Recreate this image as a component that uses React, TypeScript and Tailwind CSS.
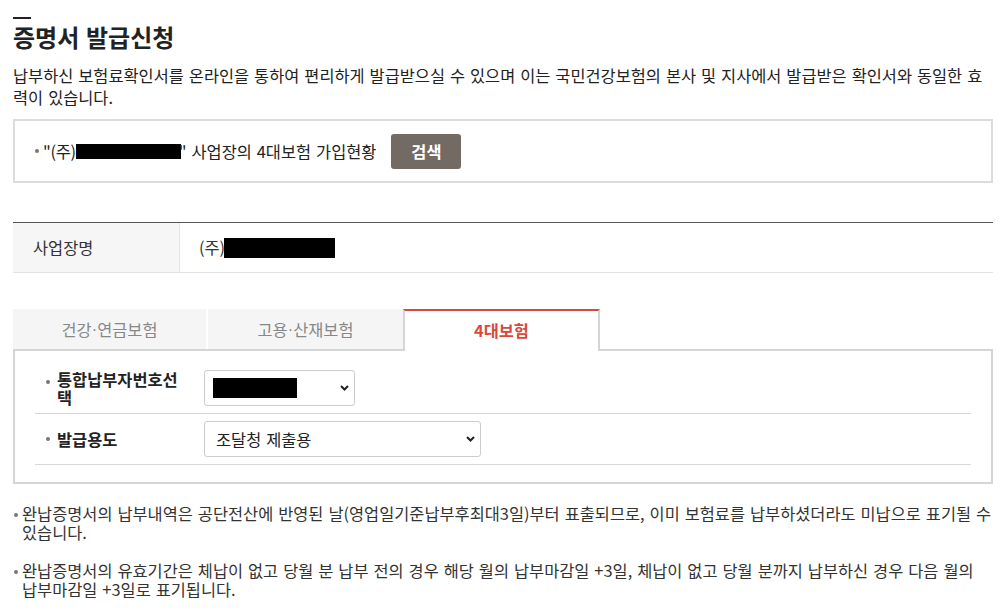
import React from 'react';

function Chevron() {
  return (
    <svg width="9" height="6" viewBox="0 0 9 6" className="absolute right-[5px] top-1/2 -translate-y-1/2">
      <path d="M1 1l3.5 3.5L8 1" fill="none" stroke="#222" strokeWidth="2" />
    </svg>
  );
}

const tabs = [
  ['건강', '연금보험'],
  ['고용', '산재보험'],
];

export default function App() {
  return (
    <div className="min-h-[608px] w-[1001px] bg-white pl-[13px] pr-[8px] pt-[17px] font-['Noto_Sans_CJK_KR','Noto_Sans',sans-serif] text-[16.4px] text-[#222] [word-spacing:1.3px]">
      <div className="h-[2px] w-[18px] bg-[#222]" />
      <h2 className="mt-[3px] text-[24px] font-bold leading-[30px]">증명서 발급신청</h2>
      <p className="mt-[12px] leading-[22px]">
        납부하신 보험료확인서를 온라인을 통하여 편리하게 발급받으실 수 있으며 이는 국민건강보험의 본사 및 지사에서 발급받은 확인서와 동일한 효력이 있습니다.
      </p>

      {/* 검색 박스 */}
      <div className="mt-[11px] flex h-[64px] items-center border-2 border-[#dcdcdc] pl-[20px]">
        <span className="h-[4px] w-[4px] rounded-full bg-[#777]" />
        <span className="ml-[4px] tracking-[-0.3px]">"(주)</span>
        <span className="inline-block h-[15px] w-[105px] bg-black" />
        <span className="-ml-[2px]">" 사업장의 4대보험 가입현황</span>
        <button className="ml-[15px] h-[35px] w-[70px] rounded-[3px] bg-[#746a64] font-bold text-white">
          검색
        </button>
      </div>

      {/* 사업장명 */}
      <div className="mt-[39px] flex border-t border-b border-t-[#555] border-b-[#e3e3e3]">
        <div className="flex h-[49px] w-[167px] items-center border-r border-[#e3e3e3] bg-[#f6f6f6] pl-[20px] text-[#333]">
          사업장명
        </div>
        <div className="flex items-center pl-[19px] text-[#333]">
          (주)
          <span className="-ml-[1px] inline-block h-[20px] w-[111px] bg-black" />
        </div>
      </div>

      {/* 탭 */}
      <div className="relative z-10 mt-[36px] -mb-[2px] flex items-start">
        {tabs.map(([a, b], i) => (
          <div
            key={a}
            className={`flex h-[40px] items-center justify-center bg-[#f5f5f5] text-[#888] ${
              i === 0 ? 'mr-[2px] w-[193px]' : 'w-[195px]'
            }`}
          >
            {a}
            <span className="font-['Liberation_Sans',sans-serif]">·</span>
            {b}
          </div>
        ))}
        <div className="flex h-[42px] w-[197px] items-center justify-center border-x-2 border-t-2 border-x-[#d5d5d5] border-t-[#d8493d] bg-white pb-[2px] font-bold text-[#d8493d]">
          4대보험
        </div>
      </div>
      <div className="border-2 border-[#d5d5d5] px-[20px] pt-[12px] pb-[17px]">
        <div className="flex items-center border-b border-[#d8d8d8] py-[7px]">
          <div className="flex w-[169px] items-start pl-[11px]">
            <span className="mt-[10px] h-[4px] w-[4px] shrink-0 rounded-full bg-[#777]" />
            <span className="ml-[7px] w-[128px] font-bold leading-[18px]">통합납부자번호선택</span>
          </div>
          <div className="relative flex h-[36px] w-[151px] items-center rounded-[3px] border border-[#ccc] pl-[8px]">
            <span className="inline-block h-[20px] w-[84px] bg-black" />
            <Chevron />
          </div>
        </div>
        <div className="flex items-center border-b border-[#d8d8d8] py-[7px]">
          <div className="flex w-[169px] items-center pl-[11px]">
            <span className="h-[4px] w-[4px] shrink-0 rounded-full bg-[#777]" />
            <span className="ml-[7px] font-bold">발급용도</span>
          </div>
          <div className="relative flex h-[36px] w-[277px] items-center rounded-[3px] border border-[#ccc] pl-[11px]">
            조달청 제출용
            <Chevron />
          </div>
        </div>
      </div>

      {/* 안내 */}
      <div className="mt-[20px] flex flex-col gap-[19px] leading-[19px] text-[#333]">
        <div className="flex items-start">
          <span className="mt-[9px] ml-[1px] h-[4px] w-[4px] shrink-0 rounded-full bg-[#777]" />
          <p className="ml-[4px]">
            완납증명서의 납부내역은 공단전산에 반영된 날(영업일기준납부후최대3일)부터 표출되므로, 이미 보험료를 납부하셨더라도 미납으로 표기될 수 있습니다.
          </p>
        </div>
        <div className="flex items-start">
          <span className="mt-[9px] ml-[1px] h-[4px] w-[4px] shrink-0 rounded-full bg-[#777]" />
          <p className="ml-[4px]">
            완납증명서의 유효기간은 체납이 없고 당월 분 납부 전의 경우 해당 월의 납부마감일 +3일, 체납이 없고 당월 분까지 납부하신 경우 다음 월의 납부마감일 +3일로 표기됩니다.
          </p>
        </div>
      </div>
    </div>
  );
}
